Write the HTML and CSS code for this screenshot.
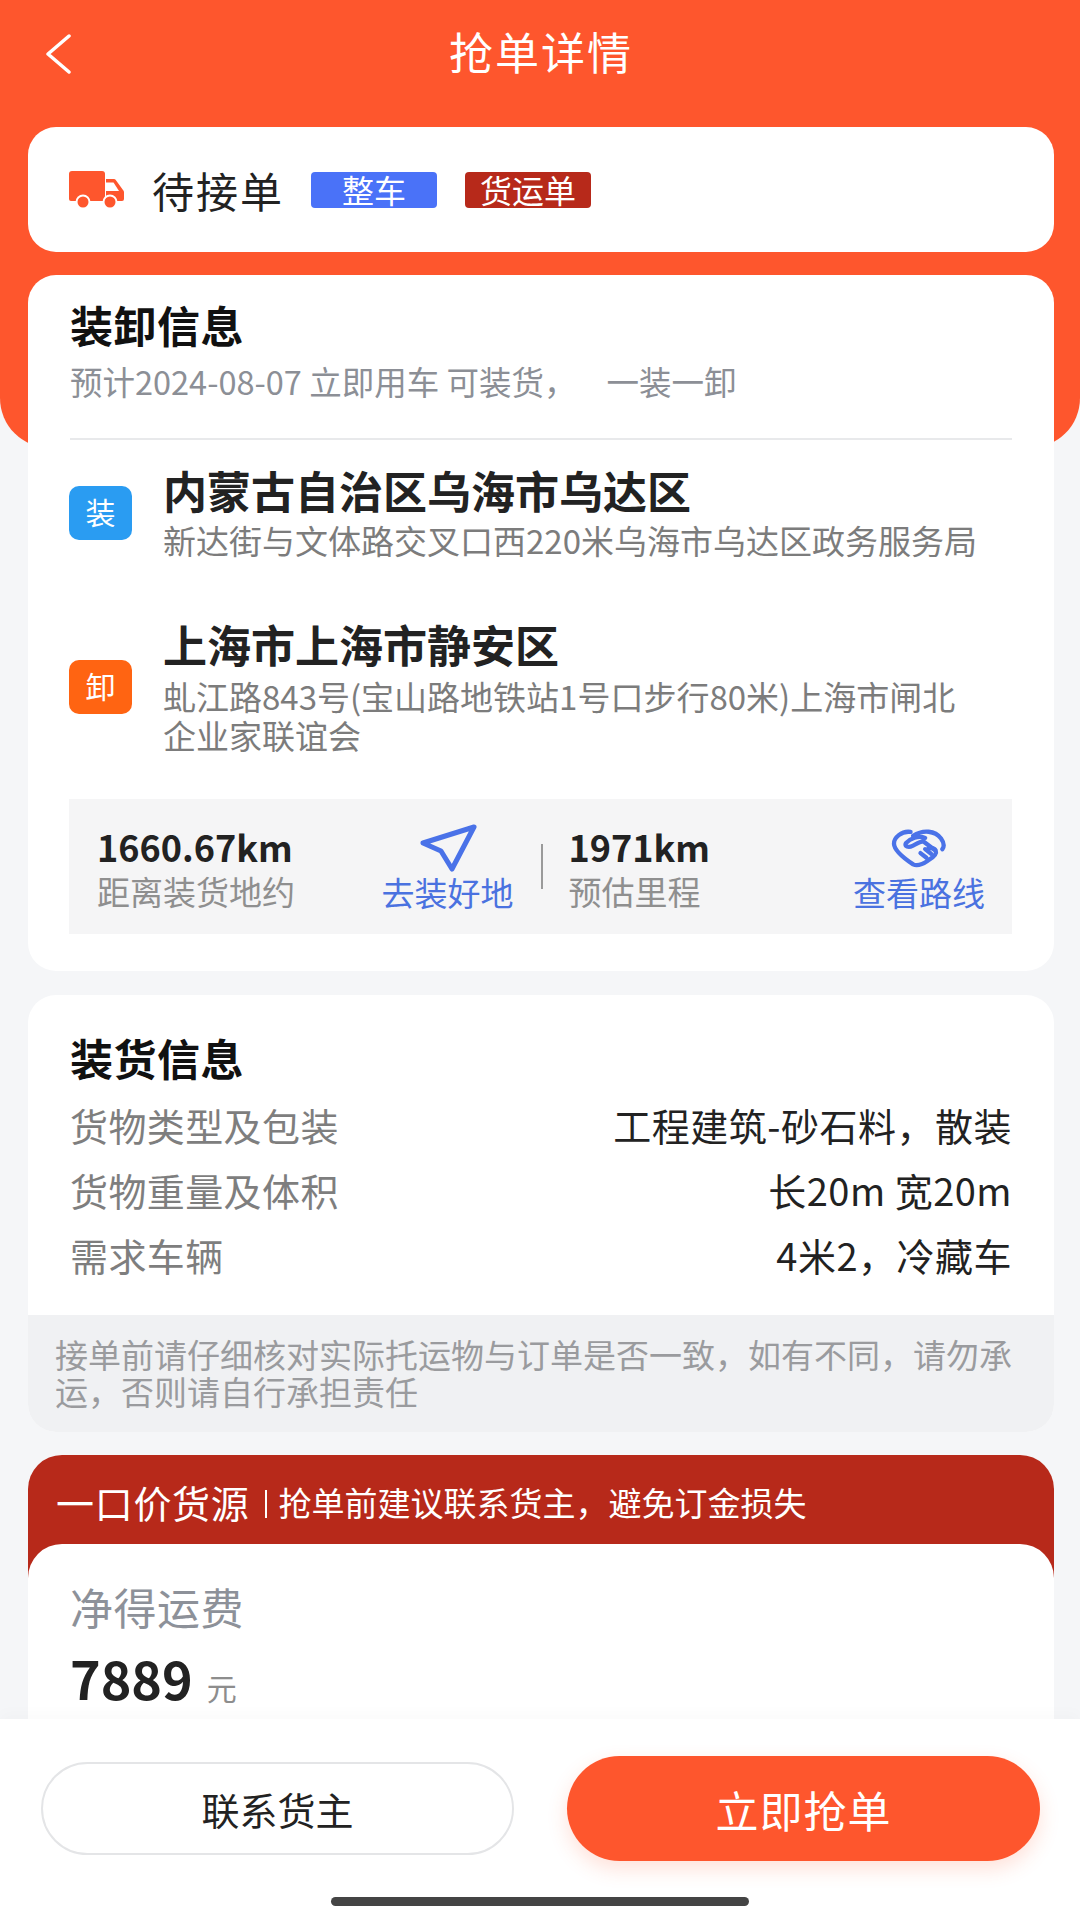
FILE: index.html
```html
<!DOCTYPE html>
<html lang="zh-CN">
<head>
<meta charset="utf-8">
<title>抢单详情</title>
<link rel="stylesheet" href="styles.css">
</head>
<body>
<div class="page">
  <div class="hero-bg"></div>
  <div class="content">
    <header class="nav">
      <svg class="back" viewBox="0 0 26 40"><path d="M24 2 L3 20 L24 38"/></svg>
      <h1 class="nav-title">抢单详情</h1>
    </header>

    <section class="card status">
      <svg class="truck" viewBox="0 0 55 38">
        <path class="fill" d="M3 0H33a3 3 0 0 1 3 3V30H2a2 2 0 0 1-2-2V3a3 3 0 0 1 3-3Z"/>
        <path class="fill" d="M37 8H45a2 2 0 0 1 1.600.800L54 19a3 3 0 0 1 1 2.200V28a2 2 0 0 1-2 2H37Z"/>
        <path class="win" d="M37 11.500H44.500L50 20H37Z"/>
        <circle class="ring" cx="14" cy="31" r="7.500"/><circle class="fill" cx="14" cy="31" r="5.500"/>
        <circle class="ring" cx="41" cy="31" r="7.500"/><circle class="fill" cx="41" cy="31" r="5.500"/>
      </svg>
      <span class="status-text">待接单</span>
      <span class="tag tag-blue">整车</span>
      <span class="tag tag-red">货运单</span>
    </section>

    <section class="card route">
      <h2 class="card-title">装卸信息</h2>
      <p class="sub">预计2024-08-07 立即用车 可装货，<span class="sub-gap">一装一卸</span></p>
      <div class="rule"></div>
      <div class="stop">
        <span class="stop-badge badge-load">装</span>
        <div>
          <div class="stop-name">内蒙古自治区乌海市乌达区</div>
          <div class="stop-addr">新达街与文体路交叉口西220米乌海市乌达区政务服务局</div>
        </div>
      </div>
      <div class="stop stop-second">
        <span class="stop-badge badge-unload">卸</span>
        <div>
          <div class="stop-name">上海市上海市静安区</div>
          <div class="stop-addr">虬江路843号(宝山路地铁站1号口步行80米)上海市闸北<br>企业家联谊会</div>
        </div>
      </div>
      <div class="strip">
        <div class="strip-half">
          <div class="stat">
            <div class="stat-num">1660.67km</div>
            <div class="stat-label">距离装货地约</div>
          </div>
          <div class="action">
            <svg class="action-icon" viewBox="0 0 58 48"><path d="M55 3 L4 19 L22 27 L33 45 Z"/></svg>
            <div class="action-label">去装好地</div>
          </div>
        </div>
        <div class="strip-sep"></div>
        <div class="strip-half strip-half-right">
          <div class="stat">
            <div class="stat-num">1971km</div>
            <div class="stat-label">预估里程</div>
          </div>
          <div class="action">
            <svg class="action-icon action-icon-hand" viewBox="90 50 175 125">
              <path d="M152 64 C125 60 101 82 102 100 C103 118 130 142 160 162 C172 168 188 162 205 150 C222 140 232 130 228 120 C224 112 214 112 205 115"/>
              <path d="M160 76 C190 56 226 60 244 84 C254 98 254 108 248 116"/>
              <path d="M196 82 C176 74 150 84 138 98 C132 108 146 112 158 106 C170 100 180 94 190 92 L224 118"/>
              <path d="M214 130 L196 116 M200 142 L182 128"/>
            </svg>
            <div class="action-label">查看路线</div>
          </div>
        </div>
      </div>
    </section>

    <section class="card goods">
      <div class="goods-body">
        <h2 class="card-title">装货信息</h2>
        <div class="spec"><span class="spec-key">货物类型及包装</span><span class="spec-val">工程建筑-砂石料，散装</span></div>
        <div class="spec"><span class="spec-key">货物重量及体积</span><span class="spec-val">长20m 宽20m</span></div>
        <div class="spec"><span class="spec-key">需求车辆</span><span class="spec-val">4米2，冷藏车</span></div>
      </div>
      <p class="notice">接单前请仔细核对实际托运物与订单是否一致，如有不同，请勿承<br>运，否则请自行承担责任</p>
    </section>

    <section class="price-card">
      <div class="price-head">
        <span class="price-head-title">一口价货源</span>
        <span class="price-head-bar"></span>
        <span class="price-head-sub">抢单前建议联系货主，避免订金损失</span>
      </div>
      <div class="price-body">
        <div class="price-label">净得运费</div>
        <div class="price-line"><span class="price-num">7889</span><span class="price-unit">元</span></div>
      </div>
    </section>
  </div>

  <footer class="bottom">
    <div class="bottom-actions">
      <button class="btn btn-ghost">联系货主</button>
      <button class="btn btn-main">立即抢单</button>
    </div>
    <div class="home-bar"></div>
  </footer>
</div>
</body>
</html>
```
FILE: styles.css
```css
* { box-sizing: border-box; }
html, body { margin: 0; padding: 0; }
body { font-family: "Noto Sans CJK SC", "Noto Sans", sans-serif; color: #222; }
h1, h2, p { margin: 0; font-weight: inherit; }

.page { position: relative; width: 1080px; height: 1920px; overflow: hidden; background: #f5f6f8; }
.hero-bg { position: absolute; left: 0; top: 0; width: 1080px; height: 448px; background: #fe562d; border-radius: 0 0 50px 50px; }
.content { position: relative; display: flex; flex-direction: column; gap: 23px; padding: 0 26px 0 28px; }

.nav { margin-bottom: -23px; display: flex; align-items: center; justify-content: center; position: relative; height: 127px; padding-bottom: 25px; }
.back { position: absolute; left: 17px; top: 34px; width: 26px; height: 40px; fill: none; stroke: #fff; stroke-width: 3.500; stroke-linecap: round; stroke-linejoin: round; }
.nav-title { font-size: 44px; letter-spacing: 2px; color: #fff; line-height: 60px; }

.card { background: #fff; border-radius: 28px; }
.status { height: 125px; display: flex; align-items: center; padding-left: 41px; }
.truck { width: 55px; height: 38px; margin-right: 28px; }
.truck .fill { fill: #fe562d; }
.truck .win, .truck .ring { fill: #fff; }
.status-text { font-size: 42px; letter-spacing: 2px; line-height: 50px; margin-right: 27px; color: #222; }
.tag { width: 126px; height: 36px; border-radius: 4px; color: #fff; font-size: 32px; line-height: 35px; text-align: center; }
.tag-blue { background: #4a72f8; margin-right: 28px; }
.tag-red { background: #b7291a; }

.route { padding: 19px 42px 37px; margin-bottom: 1px; }
.card-title { font-size: 43px; font-weight: 700; line-height: 60px; color: #111; letter-spacing: .5px; }
.sub { margin-top: 5px; font-size: 32.500px; line-height: 44px; color: #8c8f96; }
.sub-gap { margin-left: 30px; }
.rule { height: 2px; background: #e8e9eb; margin-top: 35px; }

.stop { display: flex; align-items: center; gap: 32px; margin-top: 24px; }
.stop-second { margin-top: 58px; }
.stop-badge { flex: none; width: 63px; height: 54px; border-radius: 10px; color: #fff; font-size: 30px; line-height: 50px; text-align: center; margin: 1px 0 0 -1px; }
.stop-second .stop-badge { margin-top: 0; }
.badge-load { background: #2a9cf2; }
.badge-unload { background: #ff6412; }
.stop-name { font-size: 44px; font-weight: 700; line-height: 52px; color: #222; margin-left: -1px; }
.stop-addr { margin-top: 5px; font-size: 33px; line-height: 39px; color: #7c7c7c; margin-left: -1px; }
.stop-second .stop-addr { margin-top: 7px; }

.strip { margin-top: 44px; height: 135px; background: #f5f5f6; display: flex; margin-left: -1px; }
.strip-half { flex: 1; display: flex; justify-content: space-between; padding: 0 27px 0 28px; }
.strip-half-right { padding-left: 26px; padding-right: 27px; }
.strip-sep { flex: none; width: 2px; height: 45px; margin-top: 45px; background: #9a9a9a; }
.stat { padding-top: 25px; }
.stat-num { font-size: 36px; font-weight: 700; line-height: 44px; color: #222; }
.stat-label { font-size: 33px; line-height: 42px; color: #8f8f8f; margin-top: 2px; }
.action { padding-top: 25px; display: flex; flex-direction: column; align-items: center; }
.action-icon { width: 58px; height: 48px; fill: none; stroke: #4a72e8; stroke-width: 5; stroke-linejoin: round; stroke-linecap: round; }
.action-icon-hand { stroke-width: 13; }
.action-label { font-size: 33px; line-height: 42px; color: #4a72e0; margin-top: -1px; }

.goods-body { padding: 32px 42px 28px; }
.goods .card-title { margin-bottom: 5px; }
.spec { display: flex; justify-content: space-between; align-items: center; height: 65px; font-size: 38px; }
.spec-key { color: #7e7e7e; letter-spacing: .4px; }
.spec-val { color: #222; letter-spacing: .5px; }
.notice { background: #f0f1f3; border-radius: 0 0 28px 28px; padding: 21px 0 20px 27px; height: 117px; font-size: 33px; line-height: 37px; color: #9a9b9e; }

.price-card { background: #b7291a; border-radius: 34px 34px 0 0; }
.price-head { height: 89px; display: flex; align-items: center; padding: 4px 0 0 28px; color: #fff; }
.price-head-title { font-size: 38px; letter-spacing: .7px; }
.price-head-bar { width: 2px; height: 28px; background: #fff; margin: 4px 12px 0 15px; }
.price-head-sub { font-size: 33px; }
.price-body { background: #fff; border-radius: 34px 34px 0 0; height: 300px; padding: 34px 42px 0; }
.price-label { font-size: 43px; line-height: 56px; color: #8d9199; letter-spacing: .5px; }
.price-line { display: flex; align-items: baseline; gap: 14px; margin-top: 9px; }
.price-num { font-size: 52px; font-weight: 700; line-height: 70px; color: #222; }
.price-unit { font-size: 30px; color: #8d8d8d; }

.bottom { position: absolute; left: 0; top: 1719px; width: 1080px; height: 201px; background: #fff; box-shadow: 0 -6px 14px rgba(0,0,0,.02); display: flex; flex-direction: column; align-items: center; }
.bottom-actions { width: 100%; display: flex; justify-content: space-between; align-items: center; padding: 37px 40px 0 41px; height: 142px; }
.btn { font-family: inherit; border-radius: 999px; padding: 0; }
.btn-ghost { width: 473px; height: 93px; background: #fff; border: 2px solid #e4e5e7; font-size: 38px; color: #222; }
.btn-main { width: 473px; height: 105px; background: #fe562d; border: 0; font-size: 43px; letter-spacing: 1px; color: #fff; box-shadow: 0 8px 20px rgba(254,86,45,.18); }
.home-bar { width: 418px; height: 9px; border-radius: 5px; background: #444; margin-top: 36px; }
```
